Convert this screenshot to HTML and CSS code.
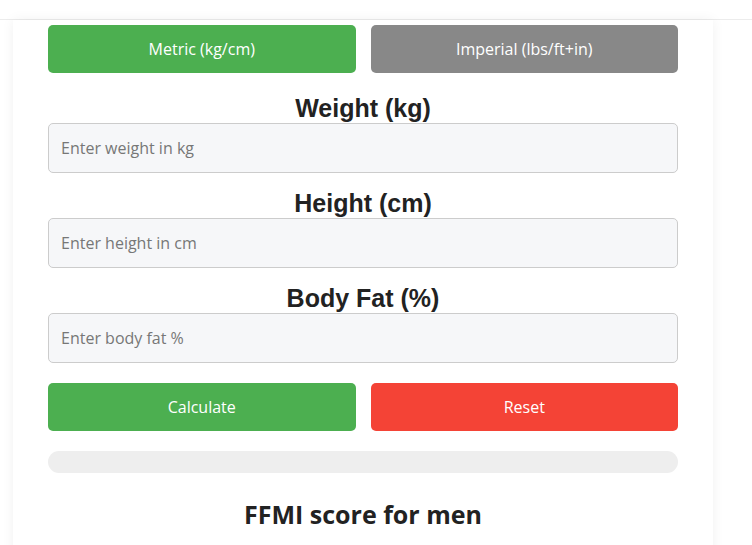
FILE: index.html
```html
<!DOCTYPE html>
<html lang="en">
<head>
<meta charset="utf-8">
<title>FFMI Calculator</title>
<link rel="stylesheet" href="styles.css">
</head>
<body>
<div class="topbar"></div>
<main class="card">
  <div class="btn-row">
    <button class="btn btn-green">Metric (kg/cm)</button>
    <button class="btn btn-gray">Imperial (lbs/ft+in)</button>
  </div>
  <div class="field">
    <label class="label" for="w">Weight (kg)</label>
    <input class="input" id="w" type="text" placeholder="Enter weight in kg">
  </div>
  <div class="field">
    <label class="label" for="h">Height (cm)</label>
    <input class="input" id="h" type="text" placeholder="Enter height in cm">
  </div>
  <div class="field">
    <label class="label" for="bf">Body Fat (%)</label>
    <input class="input" id="bf" type="text" placeholder="Enter body fat %">
  </div>
  <div class="btn-row btn-row-actions">
    <button class="btn btn-green">Calculate</button>
    <button class="btn btn-red">Reset</button>
  </div>
  <div class="progress"></div>
  <h2 class="score-title">FFMI score for men</h2>
</main>
</body>
</html>
```
FILE: styles.css
```css
* { box-sizing: border-box; }
html, body { margin: 0; padding: 0; background: #fff; }
body { font-family: "Open Sans", sans-serif; color: #222; }
.topbar {
  height: 20px;
  border-bottom: 1px solid #ececec;
}
.card {
  width: 700px;
  margin-left: 13px;
  padding: 5px 35px 30px;
  background: #fff;
  box-shadow: 0 0 12px rgba(0,0,0,0.06);
}
.btn-row {
  display: flex;
  gap: 15px;
}
.btn {
  flex: 1;
  height: 48px;
  border: none;
  border-radius: 5px;
  color: #fff;
  font-family: "Open Sans", sans-serif;
  font-size: 16px;
  cursor: pointer;
}
.btn-green { background: #4caf50; }
.btn-gray { background: #888888; }
.btn-red { background: #f44336; }
.field { margin-top: 21px; }
.field + .field { margin-top: 16px; }
.label {
  display: block;
  text-align: center;
  font-family: "Liberation Sans", Arial, sans-serif;
  font-weight: bold;
  font-size: 25px;
  line-height: 28px;
  color: #222;
  margin-bottom: 1px;
}
.input {
  display: block;
  width: 100%;
  height: 50px;
  padding: 0 12px;
  border: 1px solid #cccccc;
  border-radius: 5px;
  background: #f6f7f9;
  font-family: "Open Sans", sans-serif;
  font-size: 16px;
  color: #222;
}
.input::placeholder { color: #777; }
.btn-row-actions { margin-top: 20px; }
.progress {
  margin-top: 20px;
  height: 22px;
  border-radius: 11px;
  background: #eeeeee;
}
.score-title {
  margin: 25px 0 0;
  text-align: center;
  font-family: "Open Sans", sans-serif;
  font-weight: bold;
  font-size: 25px;
  line-height: 32px;
  color: #222;
}
```
